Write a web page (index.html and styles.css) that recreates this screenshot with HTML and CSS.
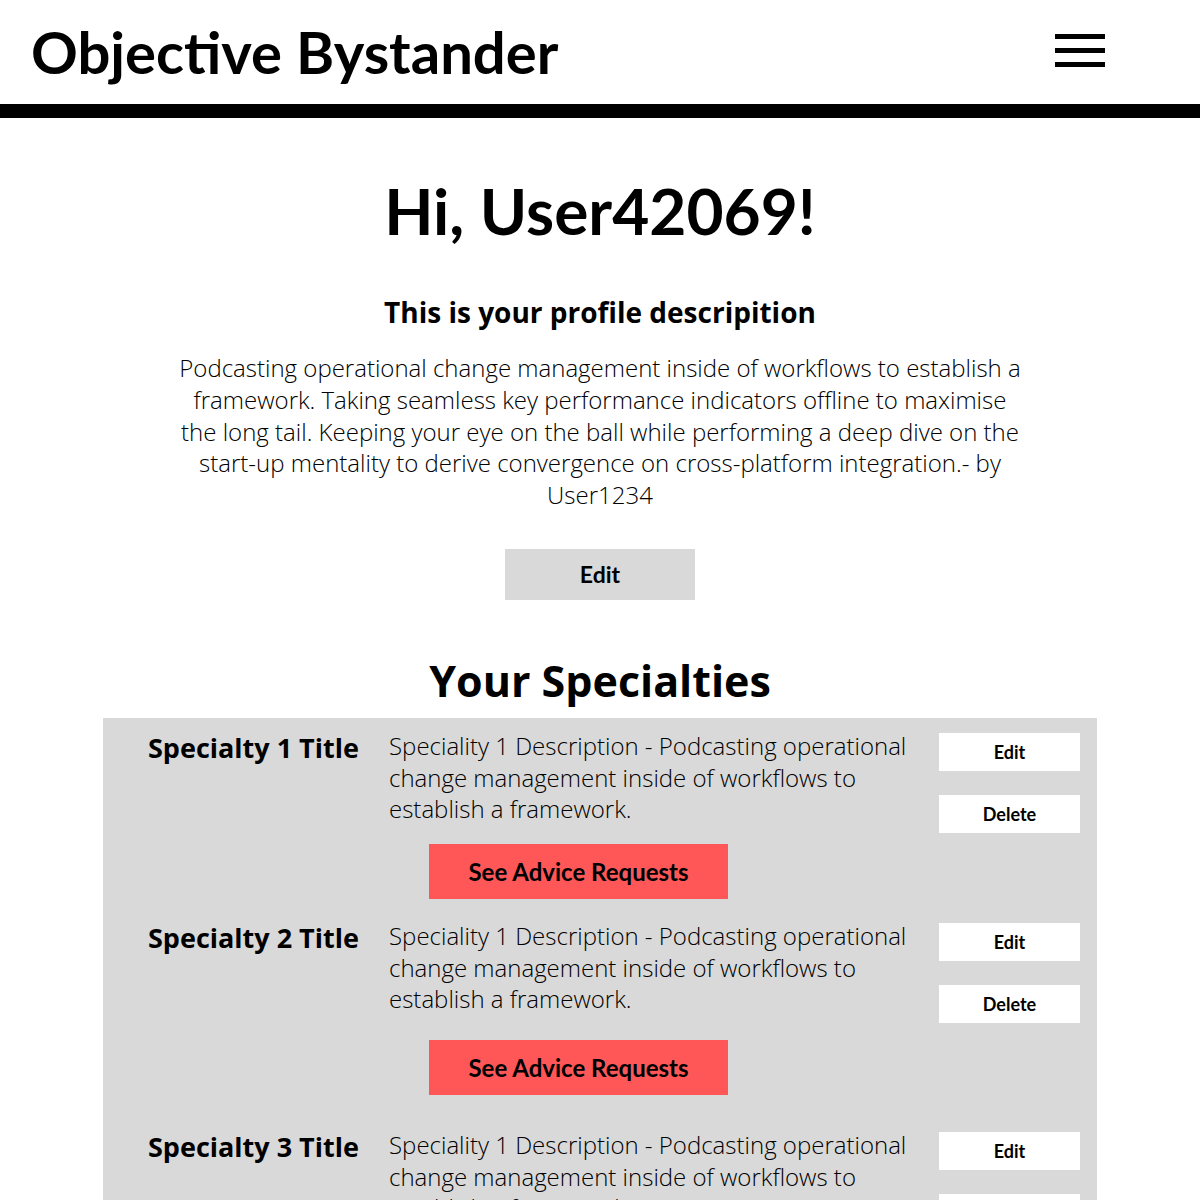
FILE: index.html
```html
<!DOCTYPE html>
<html lang="en">
<head>
<meta charset="utf-8">
<title>Objective Bystander</title>
<link rel="stylesheet" href="styles.css">
</head>
<body>
<header class="site-header">
  <div class="brand">Objective Bystander</div>
  <button class="menu-btn" aria-label="Menu">
    <span class="menu-line"></span>
    <span class="menu-line"></span>
    <span class="menu-line"></span>
  </button>
</header>

<main class="profile">
  <h1 class="greeting">Hi, User42069!</h1>
  <h2 class="desc-title">This is your profile descripition</h2>
  <p class="desc-text">Podcasting operational change management inside of workflows to establish a framework. Taking seamless key performance indicators offline to maximise the long tail. Keeping your eye on the ball while performing a deep dive on the start-up mentality to derive convergence on cross-platform integration.- by User1234</p>
  <button class="edit-profile">Edit</button>

  <h2 class="spec-heading">Your Specialties</h2>
  <section class="spec-panel">
    <div class="spec">
      <div class="spec-top">
        <h3 class="spec-title">Specialty 1 Title</h3>
        <p class="spec-desc">Speciality 1 Description - Podcasting operational change management inside of workflows to establish a framework.</p>
        <div class="spec-actions">
          <button class="small-btn">Edit</button>
          <button class="small-btn">Delete</button>
        </div>
      </div>
      <button class="advice-btn">See Advice Requests</button>
    </div>
    <div class="spec">
      <div class="spec-top">
        <h3 class="spec-title">Specialty 2 Title</h3>
        <p class="spec-desc">Speciality 1 Description - Podcasting operational change management inside of workflows to establish a framework.</p>
        <div class="spec-actions">
          <button class="small-btn">Edit</button>
          <button class="small-btn">Delete</button>
        </div>
      </div>
      <button class="advice-btn">See Advice Requests</button>
    </div>
    <div class="spec">
      <div class="spec-top">
        <h3 class="spec-title">Specialty 3 Title</h3>
        <p class="spec-desc">Speciality 1 Description - Podcasting operational change management inside of workflows to establish a framework.</p>
        <div class="spec-actions">
          <button class="small-btn">Edit</button>
          <button class="small-btn">Delete</button>
        </div>
      </div>
      <button class="advice-btn">See Advice Requests</button>
    </div>
  </section>
</main>
</body>
</html>
```

FILE: styles.css
```css
* { box-sizing: border-box; }

body {
  margin: 0;
  background: #ffffff;
  color: #000000;
  font-family: "Open Sans", "Liberation Sans", sans-serif;
}

button {
  border: 0;
  margin: 0;
  padding: 0;
  cursor: pointer;
  color: #000;
}

.site-header {
  height: 118px;
  display: flex;
  align-items: center;
  justify-content: space-between;
  padding: 0 95px 0 31px;
  border-bottom: 14px solid #000;
}

.brand {
  font-family: Lato, "Liberation Sans", sans-serif;
  font-weight: 700;
  font-size: 58px;
  line-height: 1.2;
}

.menu-btn {
  width: 50px;
  height: 33px;
  background: transparent;
  display: flex;
  flex-direction: column;
  justify-content: space-between;
  margin-top: -3px;
}

.menu-line {
  display: block;
  height: 5px;
  width: 100%;
  background: #000;
}

.profile {
  text-align: center;
  padding-top: 55px;
}

.greeting {
  margin: 0;
  font-family: Lato, "Liberation Sans", sans-serif;
  font-weight: 700;
  font-size: 64px;
  line-height: 1.2;
}

.desc-title {
  margin: 44px 0 0;
  font-weight: 700;
  font-size: 28px;
  line-height: 1.3;
}

.desc-text {
  width: 850px;
  margin: 22px auto 0;
  font-weight: 300;
  font-size: 24px;
  line-height: 31.7px;
}

.edit-profile {
  display: block;
  margin: 38px auto 0;
  width: 190px;
  height: 51px;
  background: #d9d9d9;
  font-family: Lato, "Liberation Sans", sans-serif;
  font-weight: 700;
  font-size: 23px;
}

.spec-heading {
  margin: 55px 0 0;
  font-weight: 700;
  font-size: 43px;
  line-height: 1.2;
}

.spec-panel {
  width: 994px;
  margin: 12px auto 0;
  background: #d9d9d9;
  padding: 15px 17px 40px 45px;
  text-align: left;
}

.spec + .spec { margin-top: 24px; }
.spec:nth-child(3) { margin-top: 37px; }

.spec-top {
  display: grid;
  grid-template-columns: 241px 550px 141px;
  align-items: start;
}

.spec-title {
  margin: 0;
  font-weight: 700;
  font-size: 27px;
  line-height: 1.1;
  white-space: nowrap;
}

.spec-desc {
  margin: -3px 0 0;
  padding-right: 10px;
  font-weight: 300;
  font-size: 24px;
  line-height: 31.5px;
}

.spec-actions {
  display: flex;
  flex-direction: column;
  gap: 24px;
}

.small-btn {
  height: 38px;
  background: #ffffff;
  font-family: Lato, "Liberation Sans", sans-serif;
  font-weight: 700;
  font-size: 18px;
}

.advice-btn {
  display: block;
  margin: 11px 0 0 281px;
  width: 299px;
  height: 55px;
  background: #ff5757;
  font-family: Lato, "Liberation Sans", sans-serif;
  font-weight: 700;
  font-size: 24px;
}

.spec:nth-child(2) .advice-btn { margin-top: 17px; }
```
